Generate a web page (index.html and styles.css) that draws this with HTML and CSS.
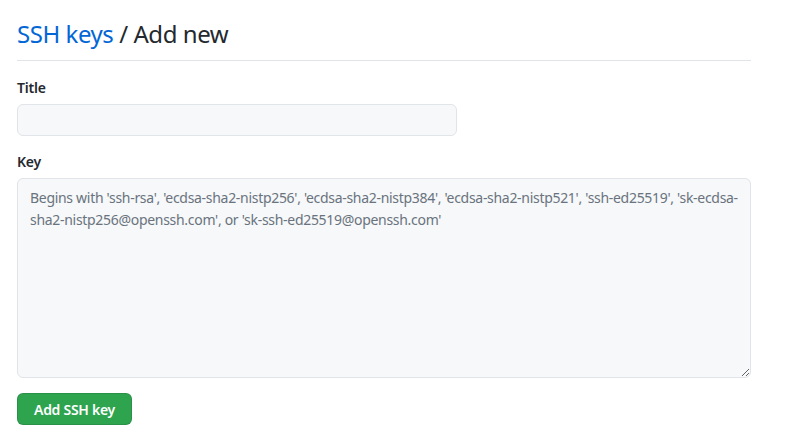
FILE: index.html
```html
<!DOCTYPE html>
<html>
<head>
<meta charset="utf-8">
<link rel="stylesheet" href="styles.css">
</head>
<body>
<div class="page">
  <div class="subhead">
    <h2 class="subhead-heading"><a href="#" class="crumb">SSH keys</a> / Add new</h2>
  </div>
  <form class="form">
    <div class="form-group">
      <label class="form-label" for="title">Title</label>
      <input class="input input-short" id="title" type="text">
    </div>
    <div class="form-group">
      <label class="form-label" for="key">Key</label>
      <textarea class="input textarea" id="key" placeholder="Begins with 'ssh-rsa', 'ecdsa-sha2-nistp256', 'ecdsa-sha2-nistp384', 'ecdsa-sha2-nistp521', 'ssh-ed25519', 'sk-ecdsa-sha2-nistp256@openssh.com', or 'sk-ssh-ed25519@openssh.com'"></textarea>
    </div>
    <button type="button" class="btn-primary">Add SSH key</button>
  </form>
</div>
</body>
</html>
```
FILE: styles.css
```css
* { box-sizing: border-box; }
html, body { margin: 0; padding: 0; background: #fff; }
body {
  font-family: "Noto Sans", "Open Sans", sans-serif;
  font-size: 14px;
  line-height: 1.5;
  color: #24292e;
}
.page {
  width: 734px;
  margin-left: 17px;
  padding-top: 16px;
}
.subhead {
  border-bottom: 1px solid #e1e4e8;
  padding-bottom: 8px;
  margin-bottom: 16px;
}
.subhead-heading {
  margin: 0;
  font-size: 24px;
  font-weight: 400;
  line-height: 36px;
  letter-spacing: -0.45px;
}
.crumb { color: #0366d6; text-decoration: none; }
.form-group { margin-bottom: 15px; }
.form-label {
  display: block;
  font-weight: 600;
  font-size: 14px;
  line-height: 21px;
  margin-bottom: 6px;
  letter-spacing: -0.2px;
}
.input {
  display: block;
  font-family: inherit;
  font-size: 14px;
  color: #24292e;
  background: #f6f8fa;
  border: 1px solid #e1e4e8;
  border-radius: 6px;
  outline: none;
}
.input-short { width: 440px; height: 32px; padding: 5px 12px; }
.textarea {
  width: 734px;
  height: 200px;
  padding: 8px 12px;
  line-height: 22px;
  letter-spacing: -0.3px;
  resize: vertical;
}
.textarea::placeholder { color: #6a737d; opacity: 1; }
.btn-primary {
  display: block;
  height: 32px;
  padding: 0 16px;
  font-family: inherit;
  font-size: 14px;
  font-weight: 600;
  letter-spacing: -0.28px;
  color: #fff;
  background: #2ea44f;
  border: 1px solid rgba(27,31,35,0.15);
  border-radius: 6px;
}
```
